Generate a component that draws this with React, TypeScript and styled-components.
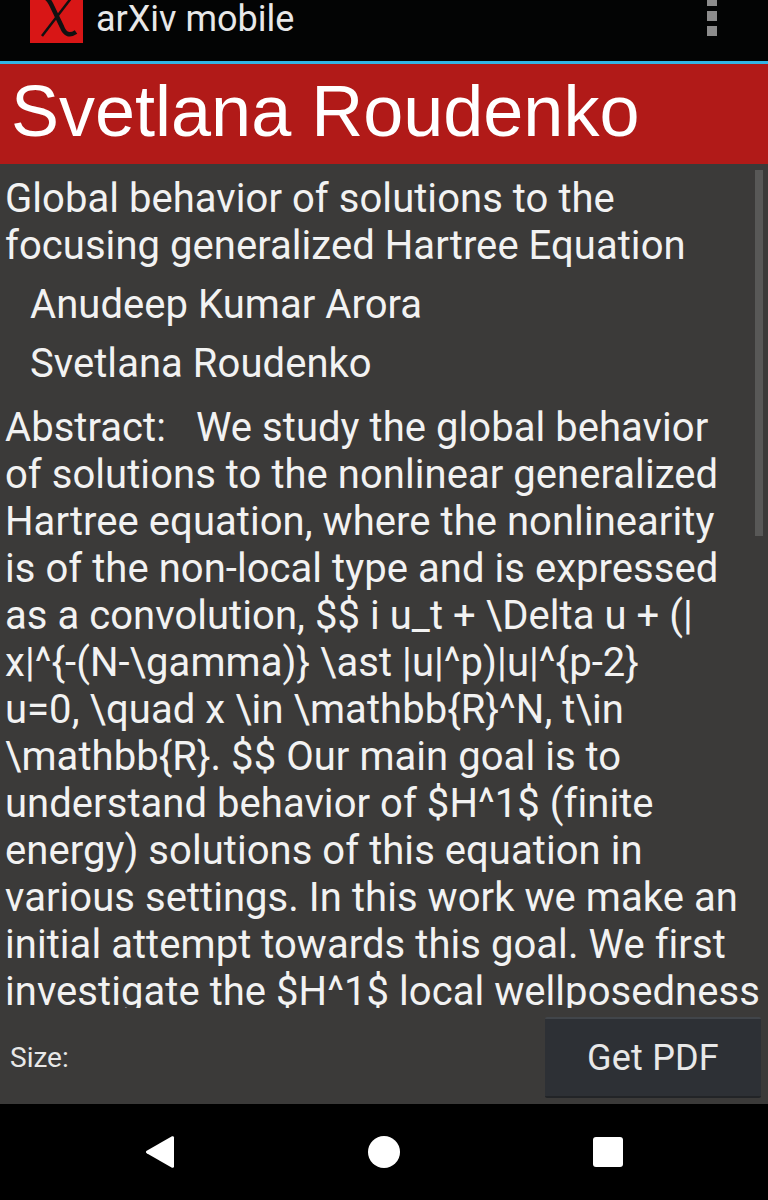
import React from "react";
import styled, { createGlobalStyle } from "styled-components";

const GlobalStyle = createGlobalStyle`
  html, body {
    margin: 0;
    padding: 0;
    background: #000;
  }
  * {
    box-sizing: border-box;
  }
`;

const Screen = styled.div`
  width: 768px;
  height: 1200px;
  display: flex;
  flex-direction: column;
  overflow: hidden;
  font-family: Roboto, "Liberation Sans", sans-serif;
  background: #3b3a39;
`;

const AppBar = styled.header`
  height: 64px;
  flex: none;
  display: flex;
  align-items: flex-start;
  justify-content: space-between;
  padding-left: 30px;
  background: #030404;
  border-bottom: 3px solid #33b5e5;
`;

const AppTitle = styled.div`
  display: flex;
  align-items: flex-start;
  gap: 13px;
`;

const Logo = styled.svg`
  display: block;
  width: 53px;
  height: 43px;
`;

const AppName = styled.span`
  font-size: 36px;
  line-height: 38px;
  color: #e8e8e8;
`;

const Overflow = styled.div`
  display: flex;
  flex-direction: column;
  gap: 5px;
  margin: -4px 51px 0 0;
`;

const OverflowDot = styled.span`
  width: 10px;
  height: 10px;
  background: #8c8c8c;
`;

const AuthorBanner = styled.h1`
  height: 100px;
  flex: none;
  margin: 0;
  padding-left: 11px;
  background: #b11a18;
  color: #fff;
  font-family: "Liberation Sans", Arial, sans-serif;
  font-size: 72px;
  font-weight: 400;
  line-height: 94px;
`;

const Content = styled.main`
  position: relative;
  flex: 1;
  min-height: 0;
  overflow: hidden;
  padding: 11px 5px 0;
  color: #f2f2f2;
  font-size: 40px;
  line-height: 47px;
  letter-spacing: 0.05px;
`;

const Scrollbar = styled.span`
  position: absolute;
  top: 6px;
  right: 5px;
  width: 8px;
  height: 366px;
  background: #585857;
`;

const PaperTitle = styled.div`
  margin-bottom: 12px;
`;

const Author = styled.div`
  padding-left: 25px;
  margin-bottom: 12px;
`;

const Abstract = styled.div`
  margin-top: 17px;
`;

const Footer = styled.footer`
  height: 96px;
  flex: none;
  display: flex;
  align-items: flex-start;
  justify-content: space-between;
  padding: 9px 7px 0 10px;
`;

const SizeLabel = styled.span`
  margin-top: 26px;
  font-size: 28px;
  line-height: 30px;
  color: #e8e8e8;
`;

const PdfButton = styled.button`
  width: 216px;
  height: 81px;
  padding: 0;
  border: none;
  border-top: 2px solid #41454a;
  border-bottom: 2px solid #222427;
  border-radius: 2px;
  background: #2d3035;
  color: #e8e8e8;
  font-family: inherit;
  font-size: 36px;
  letter-spacing: 0.2px;
`;

const NavBar = styled.nav`
  height: 96px;
  flex: none;
  display: flex;
  align-items: center;
  justify-content: space-between;
  padding: 0 143px;
  background: #000;
`;

const NavIcon = styled.svg`
  display: block;
  width: 34px;
  height: 34px;
  fill: #fff;
`;

export default function App() {
  return (
    <Screen>
      <GlobalStyle />
      <AppBar>
        <AppTitle>
          <Logo viewBox="0 0 53 43">
            <rect width="53" height="43" fill="#d81616" />
            <path
              d="M13 -3 C17 -3 19 0 21 4 L32 27 C35 35 40 36 46 32"
              fill="none"
              stroke="#111"
              strokeWidth="4.5"
            />
            <path d="M42 -3 L12 36" fill="none" stroke="#111" strokeWidth="2.5" />
          </Logo>
          <AppName>arXiv mobile</AppName>
        </AppTitle>
        <Overflow>
          <OverflowDot />
          <OverflowDot />
          <OverflowDot />
        </Overflow>
      </AppBar>
      <AuthorBanner>Svetlana Roudenko</AuthorBanner>
      <Content>
        <Scrollbar />
        <PaperTitle>
          Global behavior of solutions to the
          <br />
          focusing generalized Hartree Equation
        </PaperTitle>
        <Author>Anudeep Kumar Arora</Author>
        <Author>Svetlana Roudenko</Author>
        <Abstract>
          Abstract:&nbsp;&nbsp; We study the global behavior
          <br />
          of solutions to the nonlinear generalized
          <br />
          Hartree equation, where the nonlinearity
          <br />
          is of the non-local type and is expressed
          <br />
          as a convolution, $$ i u_t + \Delta u + (|
          <br />
          x|^{"{"}-(N-\gamma){"}"} \ast |u|^p)|u|^{"{"}p-2{"}"}
          <br />
          u=0, \quad x \in \mathbb{"{"}R{"}"}^N, t\in
          <br />
          \mathbb{"{"}R{"}"}. $$ Our main goal is to
          <br />
          understand behavior of $H^1$ (finite
          <br />
          energy) solutions of this equation in
          <br />
          various settings. In this work we make an
          <br />
          initial attempt towards this goal. We first
          <br />
          investigate the $H^1$ local wellposedness
        </Abstract>
      </Content>
      <Footer>
        <SizeLabel>Size:</SizeLabel>
        <PdfButton>Get PDF</PdfButton>
      </Footer>
      <NavBar>
        <NavIcon viewBox="0 0 34 34">
          <path d="M29 1.3 a1.5 1.5 0 0 1 2 1.3 V31.4 a1.5 1.5 0 0 1 -2 1.3 L3.7 18.3 a1.5 1.5 0 0 1 0 -2.6 Z" />
        </NavIcon>
        <NavIcon viewBox="0 0 34 34">
          <circle cx="17" cy="17" r="16" />
        </NavIcon>
        <NavIcon viewBox="0 0 34 34">
          <rect x="2" y="2" width="30" height="30" rx="3" />
        </NavIcon>
      </NavBar>
    </Screen>
  );
}
